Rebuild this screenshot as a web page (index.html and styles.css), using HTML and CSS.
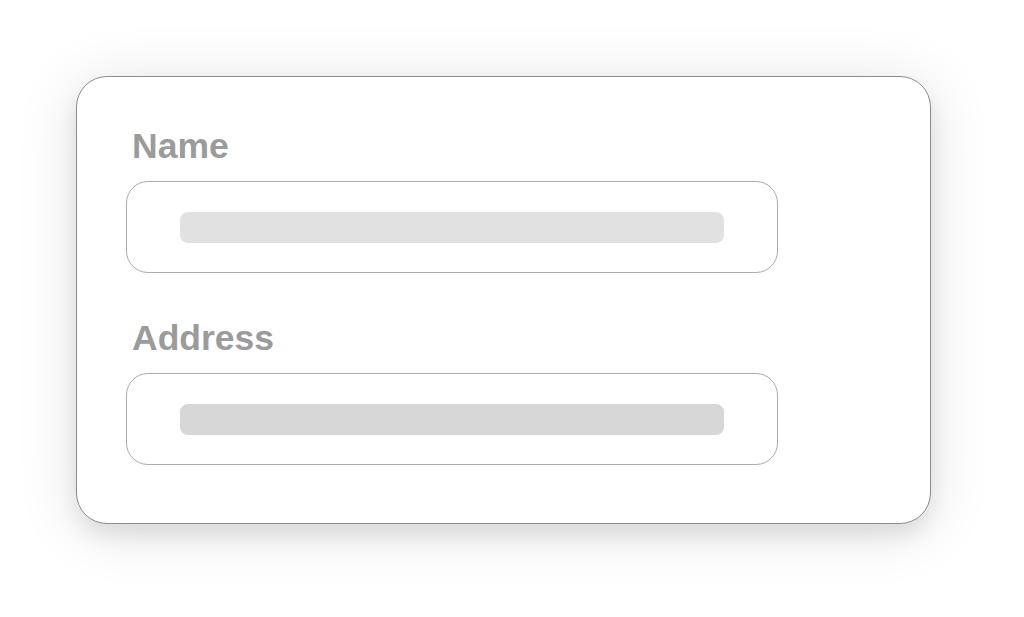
FILE: index.html
```html
<!DOCTYPE html>
<html lang="en">
<head>
<meta charset="utf-8">
<title>Form</title>
<link rel="stylesheet" href="styles.css">
</head>
<body>
  <div class="stage">
    <div class="card">
      <div class="field">
        <div class="label">Name</div>
        <div class="input"><div class="bar bar-light"></div></div>
      </div>
      <div class="field">
        <div class="label">Address</div>
        <div class="input"><div class="bar bar-dark"></div></div>
      </div>
    </div>
  </div>
</body>
</html>
```
FILE: styles.css
```css
html, body {
  margin: 0;
  padding: 0;
  background: #ffffff;
}
body {
  width: 1024px;
  height: 617px;
  overflow: hidden;
  font-family: "Liberation Sans", Arial, sans-serif;
}
.stage {
  padding: 76px 0 0 76px;
}
.card {
  box-sizing: border-box;
  width: 855px;
  height: 448px;
  background: #fff;
  border: 1px solid #8c8c8c;
  border-radius: 31px;
  box-shadow: 0 12px 22px rgba(0, 0, 0, 0.09), 0 6px 64px rgba(0, 0, 0, 0.11);
  padding: 49px 0 0 49px;
  display: flex;
  flex-direction: column;
  gap: 45px;
}
.field {
  display: flex;
  flex-direction: column;
  gap: 15px;
}
.label {
  font-size: 35.5px;
  line-height: 40px;
  font-weight: 700;
  color: #9b9b9b;
  padding-left: 6px;
}
.input {
  box-sizing: border-box;
  width: 652px;
  height: 92px;
  border: 1px solid #ababab;
  border-radius: 22px;
  display: flex;
  align-items: center;
  justify-content: center;
}
.bar {
  width: 544px;
  height: 31px;
  border-radius: 8px;
}
.bar-light { background: #e1e1e1; }
.bar-dark { background: #d7d7d7; }
```
